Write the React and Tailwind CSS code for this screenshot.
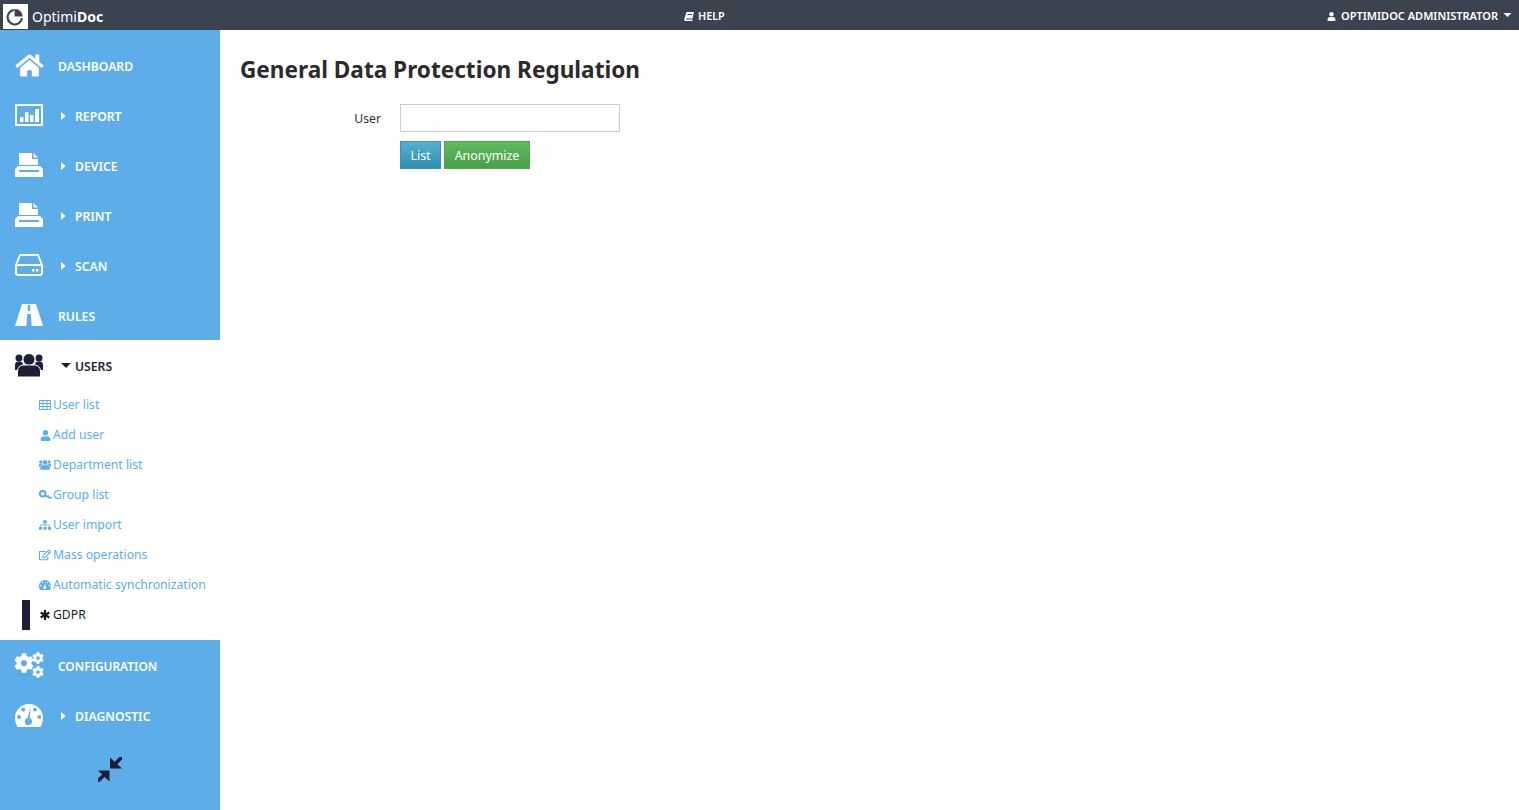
import React from "react";
import { FaHome, FaUser, FaSitemap, FaRegEdit, FaCog } from "react-icons/fa";

const font = "font-['Noto_Sans','Open_Sans',sans-serif]";
const BLUE = "#5dade9";

function ReportIcon() {
  return (
    <svg viewBox="0 0 28 22" className="w-[28px] h-[22px]" fill="currentColor">
      <path fillRule="evenodd" d="M0 0h28v22H0zM2 2v18h24V2z" />
      <rect x="5" y="13" width="3.5" height="5" />
      <rect x="10" y="8" width="3.5" height="10" />
      <rect x="15" y="11" width="3.5" height="7" />
      <rect x="20" y="5" width="4" height="13" />
    </svg>
  );
}

function PrinterIcon() {
  return (
    <svg viewBox="0 0 28 24" className="w-[28px] h-[24px]" fill="currentColor">
      <path d="M4 0h13v6h6v6H4z" />
      <path d="M18.5 0L23 4.5h-4.5z" />
      <path fillRule="evenodd" d="M3 13h22l3 3v8H0v-8zM4 17v2h20v-2z" />
    </svg>
  );
}

function HddIcon() {
  return (
    <svg viewBox="0 0 28 22" className="w-[28px] h-[22px]" fill="none" stroke="currentColor" strokeWidth="2">
      <path d="M5 1h18l4 10v8a2 2 0 0 1-2 2H3a2 2 0 0 1-2-2v-8z" strokeLinejoin="round" />
      <path d="M1 11h26" />
      <rect x="17" y="15" width="2.5" height="2.5" fill="currentColor" stroke="none" />
      <rect x="21" y="15" width="2.5" height="2.5" fill="currentColor" stroke="none" />
    </svg>
  );
}

function RoadIcon() {
  return (
    <svg viewBox="0 0 28 22" className="w-[28px] h-[22px]">
      <path d="M7 0h14l7 22H0z" fill="currentColor" />
      <path d="M13 1h2l.4 6h-2.8z" fill={BLUE} />
      <path d="M12.3 10h3.4l1 12h-5.4z" fill={BLUE} />
    </svg>
  );
}

function UsersIcon({ className, bg = "#ffffff" }) {
  return (
    <svg viewBox="0 0 28 23" className={className} fill="currentColor">
      <circle cx="4" cy="4" r="3.5" />
      <circle cx="24" cy="4" r="3.5" />
      <path d="M0 16v-5a3.5 3.5 0 0 1 3.5-3.5h1A3.5 3.5 0 0 1 8 11v5z" />
      <path d="M20 16v-5a3.5 3.5 0 0 1 3.5-3.5h1A3.5 3.5 0 0 1 28 11v5z" />
      <circle cx="14" cy="5.5" r="6" stroke={bg} strokeWidth="1" />
      <path d="M2.5 23v-6a6 6 0 0 1 6-6h11a6 6 0 0 1 6 6v6z" stroke={bg} strokeWidth="1" />
    </svg>
  );
}

function GaugeIcon({ className, hole }) {
  return (
    <svg viewBox="0 0 28 23" className={className}>
      <path d="M14 0A14 14 0 0 1 28 14C28 18 26.5 21 25.5 23H2.5C1.5 21 0 18 0 14A14 14 0 0 1 14 0z" fill="currentColor" />
      <circle cx="8.3" cy="5.6" r="1.9" fill={hole} />
      <circle cx="4" cy="13" r="1.9" fill={hole} />
      <circle cx="24.3" cy="13" r="1.9" fill={hole} />
      <circle cx="20" cy="5.6" r="1.9" fill={hole} />
      <path d="M15.5 3L14.8 15h-2.4z" fill={hole} />
      <circle cx="13.4" cy="17.5" r="3.6" fill={hole} />
    </svg>
  );
}

function CogsIcon() {
  return (
    <div className="relative w-[28px] h-[24px]">
      <FaCog className="absolute -left-[1px] top-0 w-[20px] h-[20px]" />
      <FaCog className="absolute -right-[1px] -top-[1px] w-[12px] h-[12px]" />
      <FaCog className="absolute -right-[1px] -bottom-[1px] w-[12px] h-[12px]" />
    </div>
  );
}

function TableIcon() {
  return (
    <svg viewBox="0 0 12 10" className="w-[12px] h-[10px]" fill="none" stroke="currentColor" strokeWidth="1">
      <path d="M.5.5h11v9H.5zM.5 3.5h11M.5 6.5h11M4 .5v9M8 .5v9" />
    </svg>
  );
}

function KeyIcon() {
  return (
    <svg viewBox="0 0 13 10" className="w-[13px] h-[10px] shrink-0" fill="none" stroke="currentColor">
      <circle cx="3.7" cy="3.7" r="2.8" strokeWidth="2" />
      <path d="M6 5.4L11.5 8.2M9 6.9l1-1.5M11.5 8.2l1.2-1.5" strokeWidth="1.8" />
    </svg>
  );
}

function AsteriskIcon() {
  return (
    <svg viewBox="0 0 10 10" className="w-[10px] h-[10px]" fill="none" stroke="currentColor" strokeWidth="2.2">
      <path d="M5 0v10M.7 2.5l8.6 5M.7 7.5l8.6-5" />
    </svg>
  );
}

function BookIcon() {
  return (
    <svg viewBox="0 0 10 9" className="w-[10px] h-[9px]" fill="currentColor">
      <path fillRule="evenodd" d="M2.5 0H10L8.5 6.5H2A1 1 0 0 0 2 7.5h6.5V9H1.5C.5 9 0 8 .3 7zM3.5 2v1h4.5V2z" />
    </svg>
  );
}

function CompressIcon() {
  return (
    <svg viewBox="0 0 24 25" className="w-[24px] h-[25px]" fill="currentColor" stroke="currentColor" strokeLinecap="round">
      <path d="M12 11.5V.5L24 11.5z" stroke="none" />
      <path d="M18 6l5-5" strokeWidth="3.6" />
      <path d="M11.5 13.5H0L11.5 24.5z" stroke="none" />
      <path d="M5 19l-4 4" strokeWidth="3.6" />
    </svg>
  );
}

function CaretRight() {
  return (
    <svg viewBox="0 0 5 8" className="ml-[18px] mt-[1px] w-[5px] h-[8px] shrink-0" fill="currentColor">
      <path d="M0 0l4.5 4L0 8z" />
    </svg>
  );
}

function CaretDown({ className }) {
  return (
    <svg viewBox="0 0 10 5" className={className} fill="currentColor">
      <path d="M0 0h10L5 5z" />
    </svg>
  );
}

function PieLogo() {
  return (
    <svg viewBox="0 0 20 20" className="w-[19px] h-[19px]" fill="none" stroke="#3a4450" strokeWidth="2.2">
      <path d="M8.5 3.2a7.6 7.6 0 1 0 8.3 8.6" />
      <path d="M9 9.9V2a8 8 0 0 1 8.6 7.9z" fill="#3a4450" stroke="none" />
    </svg>
  );
}

function MainItem({ icon, label, caret, active, textSize = "text-[12.2px]" }) {
  return (
    <div className={`flex items-center h-[50px] pl-[15px] ${active ? "text-[#1e1e36]" : "text-white"}`}>
      <span className="w-[28px] h-[28px] flex items-center justify-center shrink-0">{icon}</span>
      {caret === "right" && <CaretRight />}
      {caret === "down" && <CaretDown className="ml-[18px] w-[10px] h-[5px] shrink-0" />}
      <span className={`pt-[4px] ${textSize} font-semibold uppercase ${caret === "right" ? "ml-[9px]" : caret === "down" ? "ml-[4px]" : "ml-[15px]"}`}>{label}</span>
    </div>
  );
}

function SubItem({ icon, label, active }) {
  return (
    <div className={`flex items-center h-[30px] pl-[39px] text-[12.2px] ${active ? "text-[#1b1b1b]" : "text-[#5dade9]"}`}>
      <span className="w-[12px] h-[12px] flex items-center justify-center shrink-0">{icon}</span>
      <span className="ml-[2px]">{label}</span>
    </div>
  );
}

export default function App() {
  const i = "w-[12px] h-[12px] shrink-0";
  return (
    <div className={`${font} h-screen flex flex-col bg-white text-[#333] overflow-hidden`}>
      <header className="h-[30px] shrink-0 bg-[#3a4450] text-white flex items-center justify-between relative">
        <div className="flex items-center pl-[3px]">
          <span className="mt-[3px] w-[25px] h-[25px] bg-white flex items-center justify-center"><PieLogo /></span>
          <span className="ml-[4px] mt-[2px] text-[14px]">Optimi<b className="font-bold">Doc</b></span>
        </div>
        <div className="absolute left-[684px] top-0 pt-[2px] h-[30px] flex items-center gap-[4px] text-[10.8px] font-semibold">
          <BookIcon />HELP
        </div>
        <div className="flex items-center pt-[2px] pr-[7px] text-[11px] font-semibold">
          <FaUser className="w-[9px] h-[9px] mr-[5px]" />OPTIMIDOC ADMINISTRATOR
          <CaretDown className="w-[9px] h-[4px] ml-[5px] -mt-[2px]" />
        </div>
      </header>
      <div className="flex flex-1 min-h-0">
        <aside className="w-[220px] shrink-0 bg-[#5dade9] flex flex-col">
          <div className="pt-[10px]">
            <MainItem icon={<FaHome className="w-[29px] h-[25px] shrink-0" />} label="Dashboard" />
            <MainItem icon={<ReportIcon />} label="Report" caret="right" />
            <MainItem icon={<PrinterIcon />} label="Device" caret="right" />
            <MainItem icon={<PrinterIcon />} label="Print" caret="right" />
            <MainItem icon={<HddIcon />} label="Scan" caret="right" />
            <MainItem icon={<RoadIcon />} label="Rules" />
          </div>
          <div className="bg-white pb-[10px]">
            <MainItem icon={<UsersIcon className="w-[28px] h-[23px]" />} label="Users" caret="down" active />
            <SubItem icon={<TableIcon />} label="User list" />
            <SubItem icon={<FaUser className="w-[11px] h-[11px]" />} label="Add user" />
            <SubItem icon={<UsersIcon className="w-[12px] h-[10px] shrink-0" />} label="Department list" />
            <SubItem icon={<KeyIcon />} label="Group list" />
            <SubItem icon={<FaSitemap className={i} />} label="User import" />
            <SubItem icon={<FaRegEdit className={i} />} label="Mass operations" />
            <SubItem icon={<GaugeIcon className="w-[12px] h-[10px] shrink-0" hole="#ffffff" />} label="Automatic synchronization" />
            <div className="relative">
              <span className="absolute left-[22px] top-0 w-[8px] h-[30px] bg-[#1e1e36]" />
              <SubItem icon={<AsteriskIcon />} label="GDPR" active />
            </div>
          </div>
          <div>
            <MainItem icon={<CogsIcon />} label="Configuration" textSize="text-[11.9px]" />
            <MainItem icon={<GaugeIcon className="w-[28px] h-[23px]" hole={BLUE} />} label="Diagnostic" caret="right" />
          </div>
          <div className="flex justify-center pt-[17px] text-[#1e1e36]">
            <CompressIcon />
          </div>
        </aside>
        <main className="flex-1 pl-[20px] pt-[24px]">
          <h1 className="text-[22.6px] leading-[32px] font-bold text-[#2b2b2b]">General Data Protection Regulation</h1>
          <div className="mt-[18px] flex items-center">
            <label className="pt-[2px] w-[141px] text-right text-[12.2px] text-[#333]">User</label>
            <input className="ml-[19px] w-[220px] h-[28px] border border-[#ccc] bg-white outline-none" />
          </div>
          <div className="mt-[9px] ml-[160px] flex gap-[3px]">
            <button className="pt-[2px] h-[28px] w-[41px] text-[12.4px] text-white border border-[#3b93b3] bg-gradient-to-b from-[#55afd0] to-[#2f8fb0]">List</button>
            <button className="pt-[2px] h-[28px] w-[86px] text-[12.4px] text-white border border-[#4fa84f] bg-gradient-to-b from-[#5fbb5f] to-[#48a048]">Anonymize</button>
          </div>
        </main>
      </div>
    </div>
  );
}
